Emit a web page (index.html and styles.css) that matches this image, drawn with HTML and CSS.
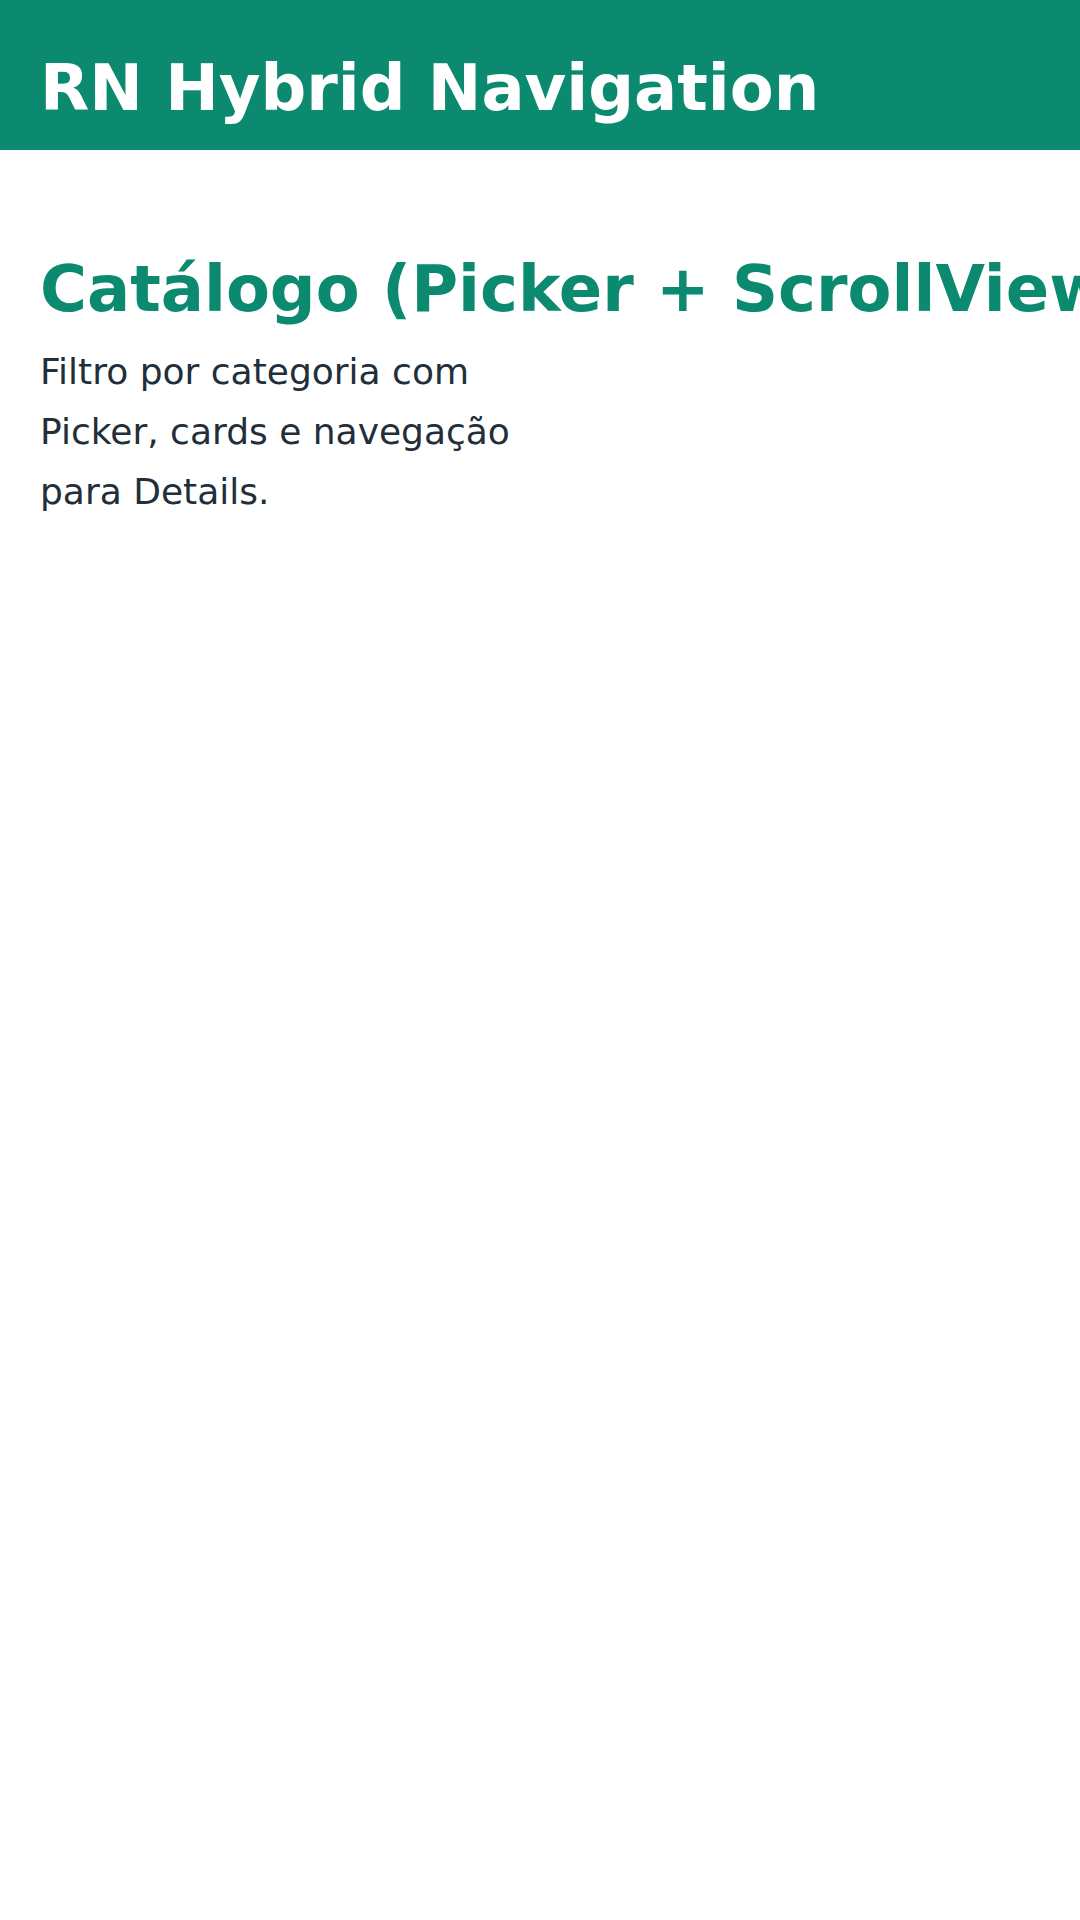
FILE: index.html
```html
<!DOCTYPE html>
<html lang="pt">
<head>
<meta charset="utf-8">
<link rel="stylesheet" href="styles.css">
</head>
<body>
<header class="appbar">
  <h1 class="appbar-title">RN Hybrid Navigation</h1>
</header>
<main class="content">
  <h2 class="page-title">Catálogo (Picker + ScrollView)</h2>
  <p class="page-desc">Filtro por categoria com Picker, cards e navegação para Details.</p>
</main>
</body>
</html>
```
FILE: styles.css
```css
html, body {
  margin: 0;
  padding: 0;
  background: #ffffff;
  overflow: hidden;
  width: 1080px;
  height: 1920px;
  font-family: "DejaVu Sans", sans-serif;
}
.appbar {
  background: #0b8a6f;
  height: 150px;
  display: flex;
  align-items: center;
  padding: 0 40px;
  box-sizing: border-box;
}
.appbar-title {
  margin: 0;
  color: #ffffff;
  font-size: 64px;
  font-weight: bold;
  line-height: 1.2;
  padding-top: 26px;
}
.content {
  padding: 101px 40px 0;
}
.page-title {
  margin: 0;
  color: #0b8a6f;
  font-size: 64px;
  font-weight: bold;
  line-height: 1.2;
  white-space: nowrap;
}
.page-desc {
  margin: 14px 0 0;
  color: #222f3a;
  font-size: 36px;
  line-height: 60px;
  max-width: 500px;
}
```
